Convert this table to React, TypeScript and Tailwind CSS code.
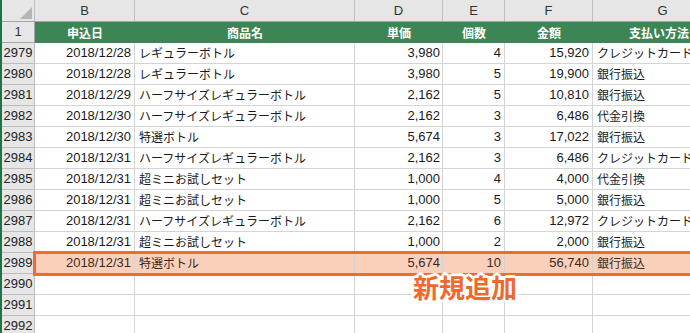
import React from "react";

type Row = [string, string, string, string, string, string, string];

const rows: Row[] = [
  ["2979", "2018/12/28", "レギュラーボトル", "3,980", "4", "15,920", "クレジットカード"],
  ["2980", "2018/12/28", "レギュラーボトル", "3,980", "5", "19,900", "銀行振込"],
  ["2981", "2018/12/29", "ハーフサイズレギュラーボトル", "2,162", "5", "10,810", "銀行振込"],
  ["2982", "2018/12/30", "ハーフサイズレギュラーボトル", "2,162", "3", "6,486", "代金引換"],
  ["2983", "2018/12/30", "特選ボトル", "5,674", "3", "17,022", "銀行振込"],
  ["2984", "2018/12/31", "ハーフサイズレギュラーボトル", "2,162", "3", "6,486", "クレジットカード"],
  ["2985", "2018/12/31", "超ミニお試しセット", "1,000", "4", "4,000", "代金引換"],
  ["2986", "2018/12/31", "超ミニお試しセット", "1,000", "5", "5,000", "銀行振込"],
  ["2987", "2018/12/31", "ハーフサイズレギュラーボトル", "2,162", "6", "12,972", "クレジットカード"],
  ["2988", "2018/12/31", "超ミニお試しセット", "1,000", "2", "2,000", "銀行振込"],
  ["2989", "2018/12/31", "特選ボトル", "5,674", "10", "56,740", "銀行振込"],
  ["2990", "", "", "", "", "", ""],
  ["2991", "", "", "", "", "", ""],
  ["2992", "", "", "", "", "", ""],
];

const cols = "grid grid-cols-[33px_100px_220px_88px_62px_88px_140px]";
const num = "font-['Liberation_Sans','Noto_Sans_CJK_JP',sans-serif] text-[13px]";
const jp = "font-['Noto_Sans_CJK_JP',sans-serif] text-[12px]";

export default function App() {
  return (
    <div className="relative w-[690px] h-[333px] overflow-hidden bg-white text-[#1a1a1a]">
      <div className="border-l-2 border-[#217346] w-[733px]">
        {/* column letters */}
        <div className={`${cols} h-[22px] bg-[#e6e6e6] border-b border-[#a6a6a6]`}>
          <div className="relative border-r border-[#bdbdbd]">
            <div className="absolute right-[2px] bottom-[2px] w-0 h-0 border-l-[12px] border-l-transparent border-b-[12px] border-b-[#b5b5b5]" />
          </div>
          {["B", "C", "D", "E", "F", "G"].map((c) => (
            <div key={c} className={`flex items-center justify-center border-r border-[#bdbdbd] text-[#333] ${num}`}>
              {c}
            </div>
          ))}
        </div>
        {/* header row 1 */}
        <div className={`${cols} h-[21px]`}>
          <div className={`flex items-center justify-center bg-[#e6e6e6] border-r border-b border-[#a6a6a6] text-[#333] ${num}`}>1</div>
          {["申込日", "商品名", "単価", "個数", "金額", "支払い方法"].map((h, i) => (
            <div
              key={h}
              className={`flex items-center bg-[#3b8654] text-white font-bold ${jp} ${i === 5 ? "justify-start pl-[36px]" : "justify-center"}`}
            >
              {h}
            </div>
          ))}
        </div>
        {rows.map((r) => {
          const hl = r[0] === "2989";
          const cell = `h-[21px] border-r border-b border-[#d4d4d4] flex items-center overflow-hidden whitespace-nowrap ${hl ? "bg-[#fbd0bb] text-[#3a2a22]" : ""}`;
          return (
            <div key={r[0]} className={`${cols}`}>
              <div className={`h-[21px] flex items-center justify-center bg-[#e6e6e6] border-r border-b border-[#bdbdbd] text-[#222] ${num}`}>
                {r[0]}
              </div>
              <div className={`${cell} justify-end pr-[3px] ${num}`}>{r[1]}</div>
              <div className={`${cell} pl-[4px] ${jp}`}>{r[2]}</div>
              <div className={`${cell} justify-end pr-[2px] ${num}`}>{r[3]}</div>
              <div className={`${cell} justify-end pr-[3px] ${num}`}>{r[4]}</div>
              <div className={`${cell} justify-end pr-[3px] ${num}`}>{r[5]}</div>
              <div className={`${cell} pl-[4px] ${jp}`}>{r[6]}</div>
            </div>
          );
        })}
      </div>
      {/* highlight box */}
      <div className="absolute left-[33px] top-[251px] w-[680px] h-[25px] border-[3px] border-[#f26b2a]" />
      {/* label */}
      <div
        className="absolute left-[413px] top-[271px] text-[26px] leading-[32px] font-bold text-[#f0682a] font-['Noto_Sans_CJK_JP',sans-serif] [text-shadow:3px_0_0_#fff,-3px_0_0_#fff,0_3px_0_#fff,0_-3px_0_#fff,2px_2px_0_#fff,-2px_2px_0_#fff,2px_-2px_0_#fff,-2px_-2px_0_#fff]"
      >
        新規追加
      </div>
    </div>
  );
}
